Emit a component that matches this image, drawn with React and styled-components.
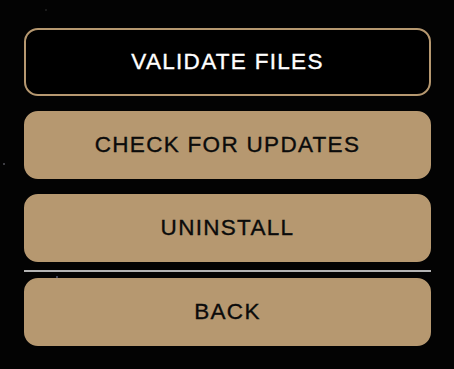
import React from "react";
import styled, { createGlobalStyle } from "styled-components";

const GlobalStyle = createGlobalStyle`
    html, body {
        margin: 0;
        padding: 0;
        background: #030303;
    }
    * {
        box-sizing: border-box;
    }
`;

const ACCENT = "#b69870";

const menuItems = [
    { label: "VALIDATE FILES", primary: true },
    { label: "CHECK FOR UPDATES" },
    { label: "UNINSTALL" },
];

const SettingsMenu = () => {
    return (
        <Container>
            <GlobalStyle />
            <Menu>
                {menuItems.map((item) => (
                    <MenuButton key={item.label} $primary={item.primary}>
                        {item.label}
                    </MenuButton>
                ))}
                <Divider />
                <MenuButton>BACK</MenuButton>
            </Menu>
        </Container>
    );
};

const Container = styled.div`
    width: 454px;
    height: 369px;
    padding: 28px 23px 0 24px;
    background-color: #030303;
    background-image:
        radial-gradient(circle at 4px 164px, rgba(200, 200, 220, 0.7) 0, transparent 1.2px),
        radial-gradient(circle at 57px 277px, rgba(170, 180, 230, 0.7) 0, transparent 1.5px),
        radial-gradient(circle at 46px 10px, rgba(200, 200, 200, 0.4) 0, transparent 1px);
    overflow: hidden;
`;

const Menu = styled.div`
    display: flex;
    flex-direction: column;
    gap: 15px;
`;

const MenuButton = styled.button`
    height: 68px;
    width: 100%;
    border-radius: 14px;
    border: 2px solid ${ACCENT};
    background: ${(p) => (p.$primary ? "#000" : ACCENT)};
    color: ${(p) => (p.$primary ? "#fff" : "#0b0b0b")};
    font-family: "Liberation Sans", Arial, sans-serif;
    font-size: 22.5px;
    letter-spacing: 1.3px;
    -webkit-text-stroke: 0.35px currentColor;
    display: flex;
    align-items: center;
    justify-content: center;
    cursor: pointer;
    padding: 0;
`;

const Divider = styled.hr`
    margin: -7px 0 -9px 0;
    height: 2px;
    border: none;
    background: #b3b3b3;
`;

export default SettingsMenu;
